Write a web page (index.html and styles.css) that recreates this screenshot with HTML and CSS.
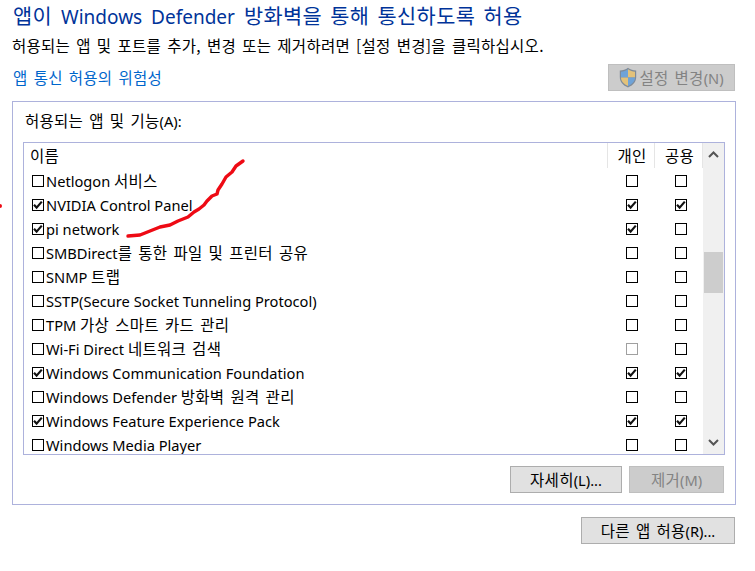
FILE: index.html
```html
<!DOCTYPE html>
<html lang="ko">
<head>
<meta charset="utf-8">
<title>허용되는 앱</title>
<link rel="stylesheet" href="styles.css">
</head>
<body>
<svg class="defs" width="0" height="0"><symbol id="tick" viewBox="0 0 10 10"><path d="M1 4.8 L3.6 7.6 L8.8 1.6" fill="none" stroke="#111" stroke-width="2.2"/></symbol></svg>
<main class="page">
  <h1 class="title"><span class="ko">앱이</span> Windows Defender <span class="ko">방화벽을 통해 통신하도록 허용</span></h1>
  <p class="desc"><span class="ko">허용되는 앱 및 포트를 추가, 변경 또는 제거하려면 [설정 변경]을 클릭하십시오.</span></p>
  <div class="linkrow">
    <a class="link"><span class="ko">앱 통신 허용의 위험성</span></a>
    <button class="btn btn-disabled btn-settings">
      <svg class="shield" width="18" height="21" viewBox="0 0 18 21">
        <path d="M9 .8 C6.5 2.6 4 3.4 .8 3.6 V10 C.8 15 4 18.5 9 20.4 C14 18.5 17.2 15 17.2 10 V3.6 C14 3.4 11.5 2.6 9 .8Z" fill="#7f8b99"/>
        <path d="M9 2.2 C6.8 3.7 4.6 4.5 2 4.7 V10.5 H9Z" fill="#6fa3d8"/>
        <path d="M9 2.2 C11.2 3.7 13.4 4.5 16 4.7 V10.5 H9Z" fill="#e3c27a"/>
        <path d="M2 10.5 H9 V18.9 C5 17.3 2 14.5 2 10.5Z" fill="#e3c27a"/>
        <path d="M16 10.5 H9 V18.9 C13 17.3 16 14.5 16 10.5Z" fill="#6fa3d8"/>
      </svg>
      <span><span class="ko">설정 변경</span>(N)</span>
    </button>
  </div>
  <section class="panel">
    <div class="panel-label"><span class="ko">허용되는 앱 및 기능</span>(A):</div>
    <div class="list">
      <div class="table">
        <div class="row head">
          <div class="name"><span class="ko">이름</span></div>
          <div class="col sep"><span class="ko">개인</span></div>
          <div class="col sep"><span class="ko">공용</span></div>
        </div>
        <div class="row"><div class="name"><span class="cb"></span><span>Netlogon <span class="ko">서비스</span></span></div><div class="col"><span class="cb"></span></div><div class="col"><span class="cb"></span></div></div>
        <div class="row"><div class="name"><span class="cb"><svg class="tick"><use href="#tick"/></svg></span><span>NVIDIA Control Panel</span></div><div class="col"><span class="cb"><svg class="tick"><use href="#tick"/></svg></span></div><div class="col"><span class="cb"><svg class="tick"><use href="#tick"/></svg></span></div></div>
        <div class="row"><div class="name"><span class="cb"><svg class="tick"><use href="#tick"/></svg></span><span>pi network</span></div><div class="col"><span class="cb"><svg class="tick"><use href="#tick"/></svg></span></div><div class="col"><span class="cb"></span></div></div>
        <div class="row"><div class="name"><span class="cb"></span><span>SMBDirect<span class="ko">를 통한 파일 및 프린터 공유</span></span></div><div class="col"><span class="cb"></span></div><div class="col"><span class="cb"></span></div></div>
        <div class="row"><div class="name"><span class="cb"></span><span>SNMP <span class="ko">트랩</span></span></div><div class="col"><span class="cb"></span></div><div class="col"><span class="cb"></span></div></div>
        <div class="row"><div class="name"><span class="cb"></span><span>SSTP(Secure Socket Tunneling Protocol)</span></div><div class="col"><span class="cb"></span></div><div class="col"><span class="cb"></span></div></div>
        <div class="row"><div class="name"><span class="cb"></span><span>TPM <span class="ko">가상 스마트 카드 관리</span></span></div><div class="col"><span class="cb"></span></div><div class="col"><span class="cb"></span></div></div>
        <div class="row"><div class="name"><span class="cb"></span><span>Wi-Fi Direct <span class="ko">네트워크 검색</span></span></div><div class="col"><span class="cb cb-off"></span></div><div class="col"><span class="cb"></span></div></div>
        <div class="row"><div class="name"><span class="cb"><svg class="tick"><use href="#tick"/></svg></span><span>Windows Communication Foundation</span></div><div class="col"><span class="cb"><svg class="tick"><use href="#tick"/></svg></span></div><div class="col"><span class="cb"><svg class="tick"><use href="#tick"/></svg></span></div></div>
        <div class="row"><div class="name"><span class="cb"></span><span>Windows Defender <span class="ko">방화벽 원격 관리</span></span></div><div class="col"><span class="cb"></span></div><div class="col"><span class="cb"></span></div></div>
        <div class="row"><div class="name"><span class="cb"><svg class="tick"><use href="#tick"/></svg></span><span>Windows Feature Experience Pack</span></div><div class="col"><span class="cb"><svg class="tick"><use href="#tick"/></svg></span></div><div class="col"><span class="cb"><svg class="tick"><use href="#tick"/></svg></span></div></div>
        <div class="row"><div class="name"><span class="cb"></span><span>Windows Media Player</span></div><div class="col"><span class="cb"></span></div><div class="col"><span class="cb"></span></div></div>
      </div>
      <div class="scrollbar">
        <svg class="arrow" width="21" height="25" viewBox="0 0 21 25"><path d="M6 14 L10.5 9.5 L15 14" fill="none" stroke="#555" stroke-width="2"/></svg>
        <div class="thumb"></div>
        <svg class="arrow arrow-down" width="21" height="25" viewBox="0 0 21 25"><path d="M6 11 L10.5 15.5 L15 11" fill="none" stroke="#555" stroke-width="2"/></svg>
      </div>
    </div>
    <div class="panel-actions">
      <button class="btn btn-details"><span><span class="ko">자세히</span>(L)...</span></button>
      <button class="btn btn-disabled btn-remove"><span><span class="ko">제거</span>(M)</span></button>
    </div>
  </section>
  <div class="footer">
    <button class="btn btn-add"><span><span class="ko">다른 앱 허용</span>(R)...</span></button>
  </div>
</main>
<svg class="scribble" width="755" height="571" viewBox="0 0 755 571">
  <path d="M243 161 L236 166 L232 172 L226 177 L222 184 L218 190 L217 194 L212 196 L207 201 L204 205 L199 209 L194 212 L188 217 L178 221 L170 225 L160 227 L150 231 L140 235 L128 236" fill="none" stroke="#ee0a14" stroke-width="3.4" stroke-linejoin="round" stroke-linecap="round"/>
  <circle cx="0" cy="206" r="2" fill="#ee0a14"/>
</svg>
</body>
</html>
```
FILE: styles.css
```css
* { box-sizing: border-box; }
html, body { margin: 0; padding: 0; background: #fff; }
body {
  width: 755px;
  height: 571px;
  overflow: hidden;
  position: relative;
  font-family: "Noto Sans", "Noto Sans CJK KR", sans-serif;
  font-size: 14.65px;
  color: #000;
}
.defs { position: absolute; }
.ko {
  font-family: "Noto Sans CJK KR", sans-serif;
  font-size: 15.5px;
  line-height: 1;
  letter-spacing: .27px;
  word-spacing: 1.5px;
}
.page { padding: 0 0 0 12px; width: 736px; }
.title {
  margin: 0;
  height: 36px;
  line-height: 34px;
  font-size: 19px;
  font-weight: 400;
  color: #003399;
  padding-left: 1px;
  white-space: nowrap;
  word-spacing: 4px;
}
.title .ko { font-size: 20.8px; letter-spacing: .4px; word-spacing: 2px; }
.desc {
  margin: 0;
  height: 28px;
  line-height: 20px;
  white-space: nowrap;
}
.linkrow {
  display: flex;
  justify-content: space-between;
  align-items: flex-start;
  height: 37px;
  padding-right: 1px;
}
.link { color: #0066cc; line-height: 28px; padding-left: 1px; }
.btn {
  font: inherit;
  height: 27px;
  padding: 0;
  color: #000;
  background: #e1e1e1;
  border: 1px solid #adadad;
  display: flex;
  align-items: center;
  justify-content: center;
  white-space: nowrap;
}
.btn-disabled { background: #cccccc; border-color: #bfbfbf; color: #838383; }
.btn-settings { width: 127px; }
.shield { flex: none; margin-right: 2px; }
.panel {
  height: 404px;
  border: 1px solid #adb2dc;
  padding: 0 11px 0 10px;
}
.panel-label { height: 40px; line-height: 38px; padding-left: 2px; white-space: nowrap; }
.list {
  display: flex;
  height: 313px;
  border: 1px solid #adb2dc;
  width: 702px;
}
.table { flex: 1; min-width: 0; overflow: hidden; }
.row { display: flex; height: 24px; align-items: center; }
.row.head { height: 26px; align-items: flex-start; }
.name { flex: 1; min-width: 0; display: flex; align-items: center; padding-left: 8px; white-space: nowrap; line-height: 24px; }
.head .name { padding-left: 6px; height: 25px; }
.col { display: flex; justify-content: center; align-items: center; }
.row > .col:nth-child(2) { width: 47px; padding-left: 3px; }
.row > .col:nth-child(3) { width: 49px; padding-left: 5px; padding-right: 1px; }
.row.head > .col:nth-child(2) { padding-left: 2px; }
.row.head > .col:nth-child(3) { padding-left: 2px; padding-right: 0; border-right: 1px solid #e5e5e5; }
.col.sep { height: 25px; border-left: 1px solid #e5e5e5; line-height: 24px; }
.cb {
  flex: none;
  width: 12px;
  height: 12px;
  border: 1px solid #000;
  background: #fff;
  display: flex;
  align-items: center;
  justify-content: center;
}
.name .cb { margin-right: 2px; }
.cb-off { border-color: #a0a0a0; }
.tick { width: 10px; height: 10px; display: block; }
.scrollbar {
  flex: none;
  width: 21px;
  background: #f0f0f0;
  display: flex;
  flex-direction: column;
}
.arrow { display: block; flex: none; }
.thumb { height: 41px; margin: 84px 1px 0 1px; background: #cdcdcd; }
.arrow-down { margin-top: auto; }
.panel-actions {
  display: flex;
  justify-content: flex-end;
  gap: 7px;
  padding-top: 11px;
}
.btn-details { width: 112px; }
.btn-remove { width: 95px; }
.footer { display: flex; justify-content: flex-end; padding-top: 12px; padding-right: 1px; }
.btn-add { width: 154px; }
.scribble { position: absolute; left: 0; top: 0; pointer-events: none; }
```
